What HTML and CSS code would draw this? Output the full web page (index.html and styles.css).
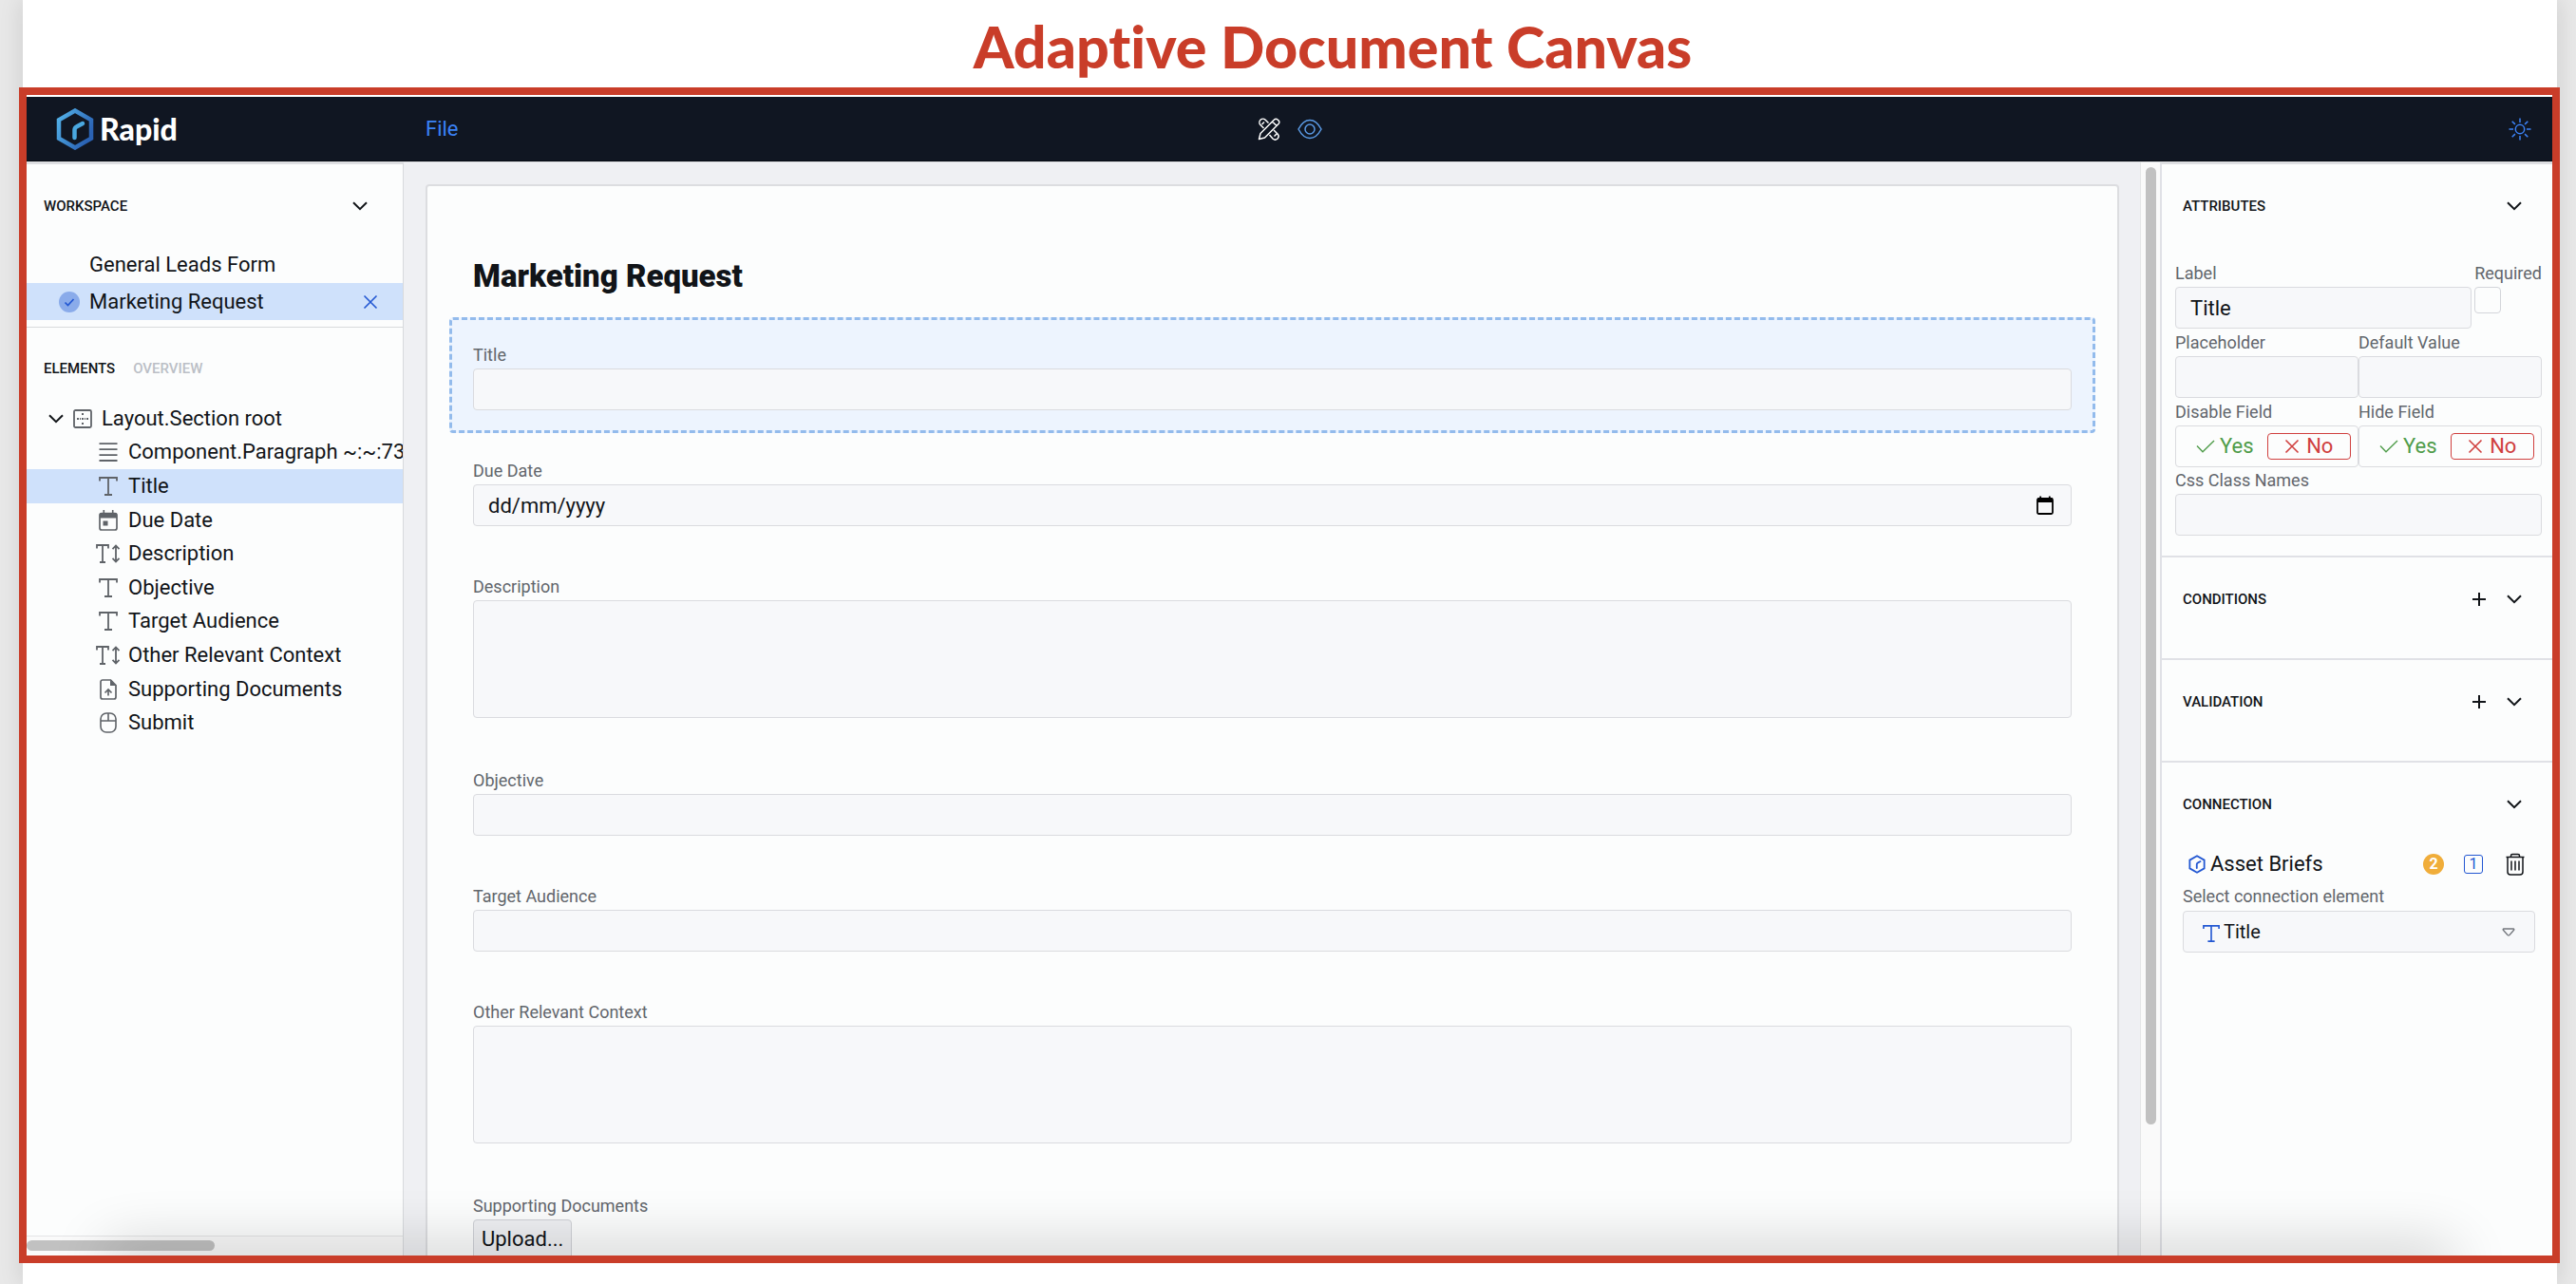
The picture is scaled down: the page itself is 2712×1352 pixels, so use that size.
FILE: index.html
```html
<!DOCTYPE html>
<html lang="en-GB">
<head>
<meta charset="utf-8">
<title>Adaptive Document Canvas</title>
<link rel="stylesheet" href="styles.css">
</head>
<body>
<svg class="sprite" aria-hidden="true">
  <defs>
    <linearGradient id="logo-blue" x1="0" y1="0" x2="1" y2="0.6">
      <stop offset="0" stop-color="#54b4ea"/>
      <stop offset="1" stop-color="#2a62b4"/>
    </linearGradient>
  </defs>
  <symbol id="i-chevron" viewBox="0 0 16 10"><path d="M1 1.2 8 8.2 15 1.2" fill="none" stroke="currentColor" stroke-width="2"/></symbol>
  <symbol id="i-plus" viewBox="0 0 16 16"><path d="M8 1v14M1 8h14" fill="none" stroke="currentColor" stroke-width="2"/></symbol>
  <symbol id="i-cross" viewBox="0 0 16 16"><path d="M1.5 1.5l13 13M14.5 1.5l-13 13" fill="none" stroke="currentColor" stroke-width="1.6"/></symbol>
  <symbol id="i-tick" viewBox="0 0 20 14"><path d="M1 6.5 7 12.8 19 1" fill="none" stroke="currentColor" stroke-width="1.4"/></symbol>
  <symbol id="i-text" viewBox="0 0 20 20"><path d="M1 4.5V1h18v3.500M10 1v18M6 19h8" fill="none" stroke="currentColor" stroke-width="1.8"/></symbol>
  <symbol id="i-textarea" viewBox="0 0 26 20"><path d="M1 4.500V1h12v3.500M7 1v18M4 19h6M21 2v16M17.500 5.200 21 1.500l3.500 3.700M17.500 14.800 21 18.500l3.500-3.700" fill="none" stroke="currentColor" stroke-width="1.8"/></symbol>
  <symbol id="i-lines" viewBox="0 0 20 20"><path d="M.5 1.200h19M.5 7.200h19M.5 13.200h19M.5 19h19" fill="none" stroke="currentColor" stroke-width="1.800"/></symbol>
  <symbol id="i-section" viewBox="0 0 20 20"><rect x="1" y="1" width="18" height="18" rx="1.500" fill="none" stroke="currentColor" stroke-width="1.800"/><path d="M9 4h2v2H9zM9 9h2v2H9zM9 14h2v2H9zM4 9h2v2H4zM14 9h2v2h-2zM7 9h1v2H7zM12 9h1v2h-1z" fill="currentColor"/></symbol>
  <symbol id="i-calendar" viewBox="0 0 20 22"><rect x="1" y="3.500" width="18" height="17.500" rx="2" fill="none" stroke="currentColor" stroke-width="1.700"/><path d="M1 3.500h18v5H1zM4.500 0h1.600v4H4.500zM13.900 0h1.600v4h-1.600zM4.500 11.500h5v5h-5z" fill="currentColor"/></symbol>
  <symbol id="i-upload" viewBox="0 0 18 22"><path d="M3 1h8.500L17 6.500V19a2 2 0 0 1-2 2H3a2 2 0 0 1-2-2V3a2 2 0 0 1 2-2z" fill="none" stroke="currentColor" stroke-width="1.700"/><path d="M11 1v6h6z" fill="currentColor"/><path d="M9 17.500v-6M5.500 14.500 9 11l3.500 3.500" fill="none" stroke="currentColor" stroke-width="1.700"/></symbol>
  <symbol id="i-mouse" viewBox="0 0 18 22"><rect x="1" y="1" width="16" height="20" rx="6" fill="none" stroke="currentColor" stroke-width="1.600"/><path d="M1 9h16M9 1v8" fill="none" stroke="currentColor" stroke-width="1.600"/></symbol>
  <symbol id="i-hex" viewBox="0 0 40 44"><path d="M20 2.500 37 12.300v19.400L20 41.500 3 31.700V12.300z" fill="none" stroke="currentColor" stroke-width="4"/><path d="M19.500 31V22q0-2 2-3l6.500-3.500" fill="none" stroke="currentColor" stroke-width="4" stroke-linecap="round"/></symbol>
</svg>

<div class="slide">
  <h1 class="slide-title">Adaptive Document Canvas</h1>
  <div class="app">
    <header class="topbar">
      <a class="brand" href="#">
        <svg class="brand-mark" viewBox="0 0 40 44"><path d="M20 2.500 37 12.300v19.400L20 41.500 3 31.700V12.300z" fill="none" stroke="url(#logo-blue)" stroke-width="4.500"/><path d="M19.500 31V23q0-2.500 2-3.500l6.500-3.500" fill="none" stroke="#4aa8e0" stroke-width="4.500" stroke-linecap="round"/></svg>
        <span>Rapid</span>
      </a>
      <a class="menu-file" href="#">File</a>
      <div class="modes">
        <button class="icon-button mode-design" aria-label="Design">
          <svg width="24" height="24" viewBox="0 0 24 24" fill="none" stroke="currentColor" stroke-width="1.500" stroke-linejoin="round"><path d="M1.500 22.500 3 16.500 17.500 2a2.400 2.400 0 0 1 3.600 0l.9.900a2.400 2.400 0 0 1 0 3.600L7.500 21zM15.500 4l4.500 4.500"/><path d="M6.500 11 3 7.500a3.700 3.700 0 0 1 0-5.200 3.700 3.700 0 0 1 5.200 0L11.500 5.500M4.500 7 7 4.500M17 13l4 4a3.700 3.700 0 0 1 0 5 3.700 3.700 0 0 1-5 0L12.500 18M17.500 19.500 20 17"/></svg>
        </button>
        <button class="icon-button mode-preview" aria-label="Preview">
          <svg width="26" height="22" viewBox="0 0 26 22" fill="none" stroke="currentColor" stroke-width="1.500"><path d="M1 11Q6 1.500 13 1.500T25 11Q20 20.500 13 20.500T1 11z"/><circle cx="13" cy="11" r="5"/></svg>
        </button>
      </div>
      <button class="icon-button theme" aria-label="Theme">
        <svg width="24" height="24" viewBox="0 0 24 24" fill="none" stroke="currentColor" stroke-width="1.500"><circle cx="12" cy="12" r="4.700"/><path d="M12 .5v4.500M12 19v4.500M.5 12H5M19 12h4.500M3.700 3.700l3.200 3.200M17.100 17.100l3.200 3.200M20.300 3.700l-3.200 3.200M6.900 17.100l-3.200 3.200"/></svg>
      </button>
    </header>

    <div class="workarea">
      <aside class="sidebar">
        <section class="workspace">
          <div class="section-head"><h2>WORKSPACE</h2><button class="icon-button" aria-label="Collapse workspace"><svg width="16" height="10"><use href="#i-chevron"/></svg></button></div>
          <ul class="docs">
            <li><a href="#">General Leads Form</a></li>
            <li class="selected"><svg class="doc-check" width="22" height="22" viewBox="0 0 22 22"><circle cx="11" cy="11" r="11" fill="#8aabea"/><path d="M6.500 11.500 9.500 14.500 15.500 8" fill="none" stroke="#2257d2" stroke-width="1.700"/></svg><a href="#">Marketing Request</a><button class="icon-button close" aria-label="Close"><svg width="16" height="16"><use href="#i-cross"/></svg></button></li>
          </ul>
        </section>
        <section class="elements">
          <div class="section-head tabs"><h2>ELEMENTS</h2><h2 class="muted">OVERVIEW</h2></div>
          <ul class="tree">
            <li class="root"><svg class="caret" width="16" height="10"><use href="#i-chevron"/></svg><svg width="20" height="20"><use href="#i-section"/></svg><span>Layout.Section root</span></li>
            <li><svg width="20" height="20"><use href="#i-lines"/></svg><span>Component.Paragraph ~:~:73</span></li>
            <li class="selected"><svg width="20" height="20"><use href="#i-text"/></svg><span>Title</span></li>
            <li><svg width="20" height="22"><use href="#i-calendar"/></svg><span>Due Date</span></li>
            <li><svg width="26" height="20"><use href="#i-textarea"/></svg><span>Description</span></li>
            <li><svg width="20" height="20"><use href="#i-text"/></svg><span>Objective</span></li>
            <li><svg width="20" height="20"><use href="#i-text"/></svg><span>Target Audience</span></li>
            <li><svg width="26" height="20"><use href="#i-textarea"/></svg><span>Other Relevant Context</span></li>
            <li><svg width="18" height="22"><use href="#i-upload"/></svg><span>Supporting Documents</span></li>
            <li><svg width="18" height="22"><use href="#i-mouse"/></svg><span>Submit</span></li>
          </ul>
        </section>
        <div class="hscroll"><div class="hthumb"></div></div>
      </aside>

      <main class="canvas">
        <form class="page">
          <h2 class="page-title">Marketing Request</h2>
          <div class="field active"><label for="f-title">Title</label><input id="f-title" type="text"></div>
          <div class="field"><label for="f-due">Due Date</label>
            <div class="date-box"><input id="f-due" type="text" placeholder="dd/mm/yyyy"><button type="button" class="icon-button" aria-label="Pick a date"><svg width="18" height="20" viewBox="0 0 18 20"><path d="M2.500 3h13A1.500 1.500 0 0 1 17 4.500v13a1.500 1.500 0 0 1-1.500 1.500h-13A1.500 1.500 0 0 1 1 17.500v-13A1.500 1.500 0 0 1 2.500 3z" fill="none" stroke="currentColor" stroke-width="1.800"/><path d="M1 2.500h16V7H1zM3.300.5h1.800v3H3.300zM12.900.5h1.800v3h-1.800z" fill="currentColor"/></svg></button></div></div>
          <div class="field"><label for="f-desc">Description</label><textarea id="f-desc"></textarea></div>
          <div class="field"><label for="f-obj">Objective</label><input id="f-obj" type="text"></div>
          <div class="field"><label for="f-aud">Target Audience</label><input id="f-aud" type="text"></div>
          <div class="field"><label for="f-ctx">Other Relevant Context</label><textarea id="f-ctx"></textarea></div>
          <div class="field"><label for="f-docs">Supporting Documents</label><button id="f-docs" type="button" class="upload">Upload...</button></div>
        </form>
      </main>

      <div class="vscroll"><div class="vthumb"></div></div>

      <aside class="inspector">
        <section class="attributes">
          <div class="section-head"><h2>ATTRIBUTES</h2><button class="icon-button" aria-label="Collapse attributes"><svg width="16" height="10"><use href="#i-chevron"/></svg></button></div>
          <div class="attr-grid">
            <div class="attr-row label-row">
              <div class="attr grow"><label for="a-label">Label</label><input id="a-label" type="text" value="Title"></div>
              <div class="attr"><label for="a-req">Required</label><input id="a-req" type="checkbox"></div>
            </div>
            <div class="attr-row">
              <div class="attr grow"><label for="a-ph">Placeholder</label><input id="a-ph" type="text"></div>
              <div class="attr grow"><label for="a-def">Default Value</label><input id="a-def" type="text"></div>
            </div>
            <div class="attr-row">
              <div class="attr grow"><span class="attr-label">Disable Field</span><div class="toggle"><button class="yes"><svg width="20" height="14"><use href="#i-tick"/></svg>Yes</button><button class="no"><svg width="16" height="16"><use href="#i-cross"/></svg>No</button></div></div>
              <div class="attr grow"><span class="attr-label">Hide Field</span><div class="toggle"><button class="yes"><svg width="20" height="14"><use href="#i-tick"/></svg>Yes</button><button class="no"><svg width="16" height="16"><use href="#i-cross"/></svg>No</button></div></div>
            </div>
            <div class="attr-row">
              <div class="attr grow"><label for="a-css">Css Class Names</label><input id="a-css" type="text"></div>
            </div>
          </div>
        </section>
        <section class="collapsed">
          <div class="section-head"><h2>CONDITIONS</h2><button class="icon-button" aria-label="Add condition"><svg width="16" height="16"><use href="#i-plus"/></svg></button><button class="icon-button" aria-label="Expand conditions"><svg width="16" height="10"><use href="#i-chevron"/></svg></button></div>
        </section>
        <section class="collapsed">
          <div class="section-head"><h2>VALIDATION</h2><button class="icon-button" aria-label="Add validation"><svg width="16" height="16"><use href="#i-plus"/></svg></button><button class="icon-button" aria-label="Expand validation"><svg width="16" height="10"><use href="#i-chevron"/></svg></button></div>
        </section>
        <section class="connection">
          <div class="section-head"><h2>CONNECTION</h2><button class="icon-button" aria-label="Collapse connection"><svg width="16" height="10"><use href="#i-chevron"/></svg></button></div>
          <div class="asset">
            <svg class="asset-icon" width="18" height="20"><use href="#i-hex"/></svg>
            <span class="asset-name">Asset Briefs</span>
            <span class="count-round">2</span>
            <span class="count-square">1</span>
            <button class="icon-button" aria-label="Delete"><svg width="20" height="24" viewBox="0 0 20 24" fill="none" stroke="currentColor" stroke-width="1.500"><path d="M.5 4.500h19M5.500 4.500V3q0-1.500 1.500-1.500h6q1.500 0 1.500 1.500v1.500M2 4.500V20q0 3 3 3h10q3 0 3-3V4.500M6 8.500v10M10 8.500v10M14 8.500v10"/></svg></button>
          </div>
          <label class="connect-label" for="c-el">Select connection element</label>
          <div class="select-box">
            <svg class="select-icon" width="18" height="18"><use href="#i-text"/></svg>
            <select id="c-el"><option>Title</option></select>
            <svg class="select-arrow" width="14" height="9" viewBox="0 0 14 9"><path d="M2 1h10q1.300.2.600 1.300L8 7.500q-1 .8-2 0L1.400 2.300Q.7 1.200 2 1z" fill="none" stroke="currentColor" stroke-width="1.300"/></svg>
          </div>
        </section>
      </aside>
    </div>
  </div>
</div>
</body>
</html>
```
FILE: styles.css
```css
* { box-sizing: border-box; }

body {
  margin: 0;
  height: 100vh;
  overflow: hidden;
  background: #e8e8e8;
  color: #111418;
  font: 22px/36px Roboto, sans-serif;
}

h1, h2, ul { margin: 0; padding: 0; }
ul { list-style: none; }
a { color: inherit; text-decoration: none; }
svg { display: block; flex: none; }
.sprite { position: absolute; width: 0; height: 0; }

input, textarea, select, button { font: inherit; color: inherit; }

input[type="text"], textarea, select {
  display: block;
  width: 100%;
  height: 44px;
  padding: 0 15px;
  border: 1px solid #dadbdf;
  border-radius: 4px;
  background: #f7f8fa;
}

textarea { height: 124px; margin-bottom: 2px; resize: none; }

.icon-button {
  display: flex;
  align-items: center;
  justify-content: center;
  padding: 0;
  border: 0;
  background: none;
}

/* Slide around the application window */
.slide {
  display: flex;
  flex-direction: column;
  height: 100%;
  margin: 0 20px 0 24px;
  padding-bottom: 22px;
  background: #fff;
  box-shadow: 0 0 24px rgba(0, 0, 0, 0.12);
}

.slide-title {
  height: 92px;
  padding-left: 90px;
  color: #c93d29;
  font: 900 61px/98px Lato, sans-serif;
  font-variant-ligatures: none;
  text-align: center;
}

.app {
  position: relative;
  display: flex;
  flex: 1;
  flex-direction: column;
  min-height: 0;
  margin: 0 -3px 0 -4px;
  padding-top: 2px;
  overflow: hidden;
  border: 8px solid #c93d29;
}

.app::after {
  content: "";
  position: absolute;
  top: 100%;
  right: 110px;
  left: 90px;
  height: 20px;
  border-radius: 20px;
  box-shadow: 0 0 60px 10px rgba(0, 0, 0, 0.2);
  pointer-events: none;
}

/* Top bar */
.topbar {
  display: grid;
  grid-template-columns: 420px 1fr auto 1fr;
  align-items: center;
  flex: none;
  height: 68px;
  padding: 0 22px 0 0;
  border-bottom: 1px solid #060a12;
  background: #101622;
}

.brand {
  display: flex;
  align-items: center;
  gap: 6px;
  padding-left: 31px;
  color: #fff;
  font: 900 32px/44px Lato, sans-serif;
}

.brand-mark { width: 40px; height: 44px; }
.menu-file { color: #3b82f6; }
.modes { display: flex; gap: 18px; padding-right: 398px; }
.mode-design { color: #fff; }
.mode-preview { color: #5b9be6; }
.theme { justify-self: end; color: #3b82f6; }

/* Three columns */
.workarea {
  display: flex;
  flex: 1;
  min-height: 0;
  border-top: 1px solid #d8dadd;
  background: #eff0f3;
}

.section-head {
  display: flex;
  align-items: center;
  height: 88px;
}

.section-head h2 { flex: 1; font: 500 15px/24px Roboto, sans-serif; }

.sidebar {
  display: flex;
  flex-direction: column;
  flex: none;
  width: 397px;
  overflow: hidden;
  border-top: 2px solid #dedfe2;
  border-right: 1px solid #d8dadd;
  background: #fcfdfd;
}

.sidebar .section-head { height: 86px; padding: 2px 37px 0 18px; }
.workspace { height: 172px; border-bottom: 1px solid #d8dadd; }

.docs li {
  display: flex;
  align-items: center;
  height: 39px;
  padding: 0 26px 0 66px;
}

.docs .selected { padding-left: 34px; background: #cfe1fb; }
.docs a { flex: 1; }
.doc-check { margin-right: 10px; }
.close { color: #2257d2; }

.sidebar .tabs { gap: 19px; height: 78px; padding-top: 8px; }
.sidebar .tabs h2 { flex: none; }
.muted { color: #bbbfc6; }

.tree { display: grid; grid-auto-rows: 1fr; min-height: 356px; line-height: 34px; }

.tree li {
  display: grid;
  grid-template-columns: 28px auto;
  align-items: center;
  gap: 7px;
  padding-left: 72px;
  white-space: nowrap;
}

.tree svg { justify-self: center; color: #5f6368; }
.tree .selected { background: #cfe1fb; }
.tree .root { grid-template-columns: 16px 28px auto; gap: 6px; padding-left: 23px; }
.tree .caret { color: #111418; }

.hscroll {
  margin-top: auto;
  height: 21px;
  padding-top: 4px;
  border-top: 1px solid #e4e5e6;
  background: #fafafa;
}

.hthumb { width: 50%; height: 11px; border-radius: 6px; background: #c1c1c1; }

.canvas {
  flex: 1;
  min-width: 0;
  padding: 23px 22px 0 23px;
  overflow: hidden;
}

.page {
  padding: 63px 23px 80px;
  border: 2px solid #dcdde0;
  border-radius: 4px;
  background: #fcfdfd;
}

.page-title { height: 75px; padding-left: 25px; font: 900 33px/64px Roboto, sans-serif; }
.field { padding: 26px 25px 24px; }
.field label { display: block; height: 28px; color: #62666c; font-size: 18px; line-height: 28px; }

.active {
  padding: 23px 22px 21px;
  border: 3px dashed #93bbec;
  border-radius: 4px;
  background: #edf4fe;
}

.date-box { position: relative; }
.date-box input::placeholder { color: #111418; opacity: 1; }
.date-box .icon-button { position: absolute; top: 12px; right: 19px; color: #000; }

.upload {
  display: block;
  height: 42px;
  padding: 0 8px;
  border: 1px solid #cfd1d6;
  border-radius: 4px;
  background: #eff0f3;
}

.vscroll {
  flex: none;
  width: 21px;
  padding: 5px 4px 0 5px;
  border-left: 1px solid #e4e5e6;
  background: #fafafa;
}

.vthumb { height: 88%; border-radius: 6px; background: #c1c1c1; }

/* Inspector */
.inspector {
  flex: none;
  width: 413px;
  border-top: 2px solid #dedfe2;
  border-left: 2px solid #e0e1e6;
  background: #fcfdfd;
}

.inspector .section-head { gap: 21px; padding: 0 32px 0 22px; }
.inspector section { border-bottom: 2px solid #e0e1e6; }
.inspector .connection { border-bottom: 0; }
.attributes { height: 414px; }
.collapsed { height: 108px; }

.attr-grid { padding: 13px 11px 0 14px; }
.attr-row { display: flex; }
.label-row { gap: 3px; }
.grow { flex: 1; min-width: 0; }

.attr label, .attr-label {
  display: block;
  height: 28px;
  color: #62666c;
  font-size: 18px;
  line-height: 28px;
}

.attr input[type="text"] { margin-bottom: 1px; }

.attr input[type="checkbox"] {
  display: block;
  width: 28px;
  height: 28px;
  margin: 0;
  appearance: none;
  border: 1px solid #d3d5da;
  border-radius: 4px;
  background: #fcfdfd;
}

.toggle {
  display: flex;
  align-items: center;
  height: 44px;
  padding: 0 7px;
  border: 1px solid #dadbdf;
  border-radius: 4px;
}

.toggle button {
  display: flex;
  align-items: center;
  justify-content: center;
  flex: 1;
  gap: 5px;
  height: 28px;
  padding: 0;
  border: 1px solid transparent;
  border-radius: 4px;
  background: none;
  line-height: 24px;
}

.toggle .yes { color: #4f9c4a; }
.toggle .no { gap: 7px; border-color: #d0403f; color: #d0403f; }

.asset {
  display: flex;
  align-items: center;
  height: 37px;
  padding: 0 29px 0 28px;
}

.asset-icon { color: #2257d2; }
.asset-name { flex: 1; padding-left: 5px; }

.count-round, .count-square {
  font-size: 16px;
  text-align: center;
}

.count-round {
  width: 22px;
  margin-right: 21px;
  border-radius: 11px;
  background: #f0ad3a;
  color: #fff;
  font-weight: 700;
  line-height: 22px;
}

.count-square {
  width: 20px;
  margin-right: 24px;
  border: 1px solid #2257d2;
  border-radius: 3px;
  color: #2257d2;
  line-height: 18px;
}

.connect-label {
  display: block;
  padding: 1px 0 0 22px;
  color: #62666c;
  font-size: 18px;
  line-height: 30px;
}

.select-box { position: relative; margin: 0 18px 0 22px; }
.select-box select { padding-left: 42px; appearance: none; font-size: 20px; }
.select-icon { position: absolute; top: 15px; left: 21px; color: #2257d2; }
.select-arrow { position: absolute; top: 18px; right: 21px; color: #74777d; }
```
